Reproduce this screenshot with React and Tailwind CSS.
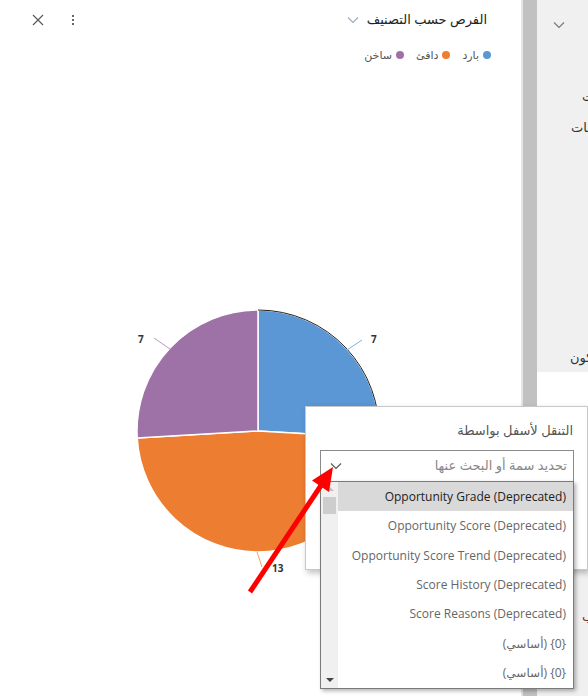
import React from "react";

const FONT = { fontFamily: '"Open Sans", "DejaVu Sans", sans-serif' };

const items = [
  "Opportunity Grade (Deprecated)",
  "Opportunity Score (Deprecated)",
  "Opportunity Score Trend (Deprecated)",
  "Score History (Deprecated)",
  "Score Reasons (Deprecated)",
  "{0} (أساسي)",
  "{0} (أساسي)",
];

const legend = [
  { label: "بارد", color: "bg-[#5b97d5]" },
  { label: "دافئ", color: "bg-[#ed7d31]" },
  { label: "ساخن", color: "bg-[#9e72a6]" },
];

// pie: center (258,361) in svg, r 121, values 7 / 13 / 7
const cx = 258;
const cy = 361;
const r = 121;
const pt = (deg) => {
  const a = (deg * Math.PI) / 180;
  return [cx + r * Math.sin(a), cy - r * Math.cos(a)];
};
const slice = (a0, a1) => {
  const [x0, y0] = pt(a0);
  const [x1, y1] = pt(a1);
  const large = a1 - a0 > 180 ? 1 : 0;
  return `M${cx} ${cy} L${x0} ${y0} A${r} ${r} 0 ${large} 1 ${x1} ${y1} Z`;
};
const arc = (a0, a1) => {
  const [x0, y0] = pt(a0);
  const [x1, y1] = pt(a1);
  return `M${x0} ${y0} A${r} ${r} 0 0 1 ${x1} ${y1}`;
};

const PieChart = () => (
  <svg width="521" height="626" className="block">
    <path d={slice(0, 93.33)} fill="#5b97d5" stroke="#fff" strokeWidth="1.5" />
    <path d={slice(93.33, 266.67)} fill="#ed7d31" stroke="#fff" strokeWidth="1.5" />
    <path d={slice(266.67, 360)} fill="#9e72a6" stroke="#fff" strokeWidth="1.5" />
    <path d={arc(0, 93.33)} fill="none" stroke="#222" strokeWidth="1" />
    <line x1="347" y1="280" x2="362" y2="270" stroke="#7fb0e0" strokeWidth="1" />
    <line x1="154" y1="268" x2="170" y2="279" stroke="#b99ac0" strokeWidth="1" />
    <line x1="257" y1="482" x2="262" y2="497" stroke="#f2a36b" strokeWidth="1" />
    <text x="371" y="273" fontSize="10" fontWeight="bold" fill="#333" style={FONT}>7</text>
    <text x="138" y="273" fontSize="10" fontWeight="bold" fill="#333" style={FONT}>7</text>
    <text x="272" y="502" fontSize="10" fontWeight="bold" fill="#333" style={FONT}>13</text>
  </svg>
);

const Chevron = ({ className = "", color = "#666" }) => (
  <svg width="12" height="8" viewBox="0 0 12 8" className={className}>
    <path d="M1 1.5 L6 6.5 L11 1.5" fill="none" stroke={color} strokeWidth="1.1" />
  </svg>
);

const RedArrow = () => (
  <svg
    width="588"
    height="696"
    className="absolute left-0 top-0 pointer-events-none"
  >
    <line x1="250" y1="592" x2="322" y2="484" stroke="#ff0000" strokeWidth="5" />
    <polygon points="333,467 329,492 312,480.5" fill="#ff0000" />
  </svg>
);

export default function App() {
  return (
    <div
      className="relative w-[588px] h-[696px] overflow-hidden bg-white flex"
      style={FONT}
    >
      {/* chart card */}
      <div className="w-[521px] h-full flex flex-col bg-white">
        <div className="h-[40px] flex items-center pl-[32px] pr-[34px]">
          <button className="w-[12px] h-[12px] flex items-center justify-center">
            <svg width="12" height="12" viewBox="0 0 12 12">
              <path d="M1 1 L11 11 M11 1 L1 11" stroke="#555" strokeWidth="1.1" />
            </svg>
          </button>
          <div className="ml-[28px] flex flex-col gap-[2px] items-center">
            <span className="w-[2px] h-[2px] bg-[#333] rounded-full" />
            <span className="w-[2px] h-[2px] bg-[#333] rounded-full" />
            <span className="w-[2px] h-[2px] bg-[#333] rounded-full" />
          </div>
          <div className="flex-1" />
          <Chevron className="mr-[8px]" color="#9aaac0" />
          <span dir="rtl" className="text-[13px] text-[#222]">
            الفرص حسب التصنيف
          </span>
        </div>
        <div
          dir="rtl"
          className="h-[30px] flex items-center gap-[12px] pr-[30px] text-[11px] text-[#555]"
        >
          {legend.map((l) => (
            <div key={l.label} className="flex items-center gap-[4px]">
              <span className={`w-[8px] h-[8px] rounded-full ${l.color}`} />
              <span>{l.label}</span>
            </div>
          ))}
        </div>
        <PieChart />
      </div>

      {/* splitter */}
      <div className="w-[2px] h-full bg-[#e4e4e4]" />
      <div className="w-[14px] h-full bg-[#c1c1c1]" />

      {/* side panel */}
      <div className="flex-1 h-full bg-[#f0f0f0] flex flex-col overflow-hidden">
        <div className="h-[50px] flex items-center pl-[16px]">
          <Chevron color="#777" />
        </div>
        <div className="h-[56px] flex items-end pl-[45px] text-[13px] text-[#333] whitespace-nowrap">
          <span dir="rtl">الوقت</span>
        </div>
        <div className="h-[31px] flex items-end pl-[34px] text-[13px] text-[#333] whitespace-nowrap">
          <span dir="rtl">الملاحظات</span>
        </div>
        <div className="h-[230px] flex items-end pl-[33px] text-[13px] text-[#333] whitespace-nowrap">
          <span dir="rtl">سيكون</span>
        </div>
        <div className="h-[5px]" />
        <div className="h-[130px] bg-white" />
        <div className="h-[124px] flex items-end pl-[45px] text-[13px] text-[#733] whitespace-nowrap">
          <span dir="rtl">ب</span>
        </div>
      </div>

      {/* navigate-by popover */}
      <div className="absolute left-[305px] top-[406px] w-[283px] h-[164px] bg-white border border-[#c8c8c8] shadow-[2px_3px_6px_rgba(0,0,0,0.25)]">
        <div dir="rtl" className="pr-[14px] pt-[14px] text-[13px] text-[#555]">
          التنقل لأسفل بواسطة
        </div>
        <div className="ml-[14px] mt-[9px] w-[254px] h-[32px] border border-[#8a8a8a] flex items-center pl-[9px] pr-[6px]">
          <Chevron color="#555" />
          <div dir="rtl" className="flex-1 text-[13px] text-[#888]">
            تحديد سمة أو البحث عنها
          </div>
        </div>
      </div>

      {/* attribute list */}
      <div className="absolute left-[320px] top-[481px] w-[254px] h-[208px] bg-white border border-[#7a7a7a] shadow-[2px_2px_4px_rgba(0,0,0,0.3)] flex">
        <div className="w-[17px] h-full bg-[#f0f0f0] flex flex-col items-center">
          <div className="mt-[5px] w-0 h-0 border-l-[4px] border-r-[4px] border-b-[4px] border-l-transparent border-r-transparent border-b-[#c0c0c0]" />
          <div className="mt-[6px] w-[13px] h-[17px] bg-[#cdcdcd]" />
          <div className="flex-1" />
          <div className="mb-[6px] w-0 h-0 border-l-[4px] border-r-[4px] border-t-[4px] border-l-transparent border-r-transparent border-t-[#444]" />
        </div>
        <div className="flex-1 flex flex-col">
          {items.map((it, i) => (
            <div
              key={i}
              className={`h-[29.6px] flex items-center justify-end pr-[7px] text-[12px] ${
                i === 0 ? "bg-[#d9d9d9] text-[#222]" : "text-[#666]"
              }`}
            >
              <span dir={it.startsWith("{") ? "rtl" : "ltr"}>{it}</span>
            </div>
          ))}
        </div>
      </div>

      <RedArrow />
    </div>
  );
}
